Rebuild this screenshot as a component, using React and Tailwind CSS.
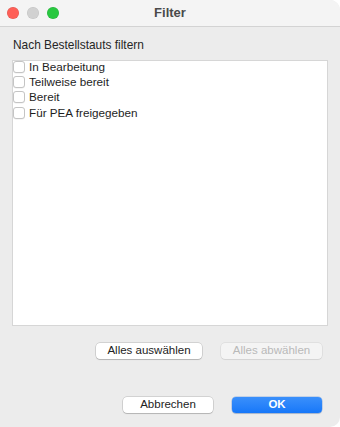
import React, { useState } from "react";

const statuses = ["In Bearbeitung", "Teilweise bereit", "Bereit", "Für PEA freigegeben"];

function Checkbox({ checked, onChange, label }) {
  return (
    <label className="flex h-[12px] items-center gap-[4px] cursor-default">
      <span
        onClick={onChange}
        className={`block h-[12px] w-[12px] shrink-0 rounded-[3px] border ${
          checked ? "border-[#1a7ff9] bg-[#1a7ff9]" : "border-[#c4c4c4] bg-white"
        } shadow-[0_0.5px_0.5px_rgba(0,0,0,0.08)]`}
      />
      <span className="text-[11.7px] leading-[12px] text-[#1e1e1e]">{label}</span>
    </label>
  );
}

function MacButton({ children, disabled, primary, className = "" }) {
  let look =
    "bg-white text-[#222] shadow-[0_0_0_0.5px_rgba(0,0,0,0.22),0_1px_1px_rgba(0,0,0,0.14)]";
  if (disabled)
    look =
      "bg-[#f4f4f4] text-[#b9b9b9] shadow-[0_0_0_0.5px_rgba(0,0,0,0.1),0_1px_1px_rgba(0,0,0,0.05)]";
  if (primary)
    look =
      "bg-gradient-to-b from-[#3a90fb] to-[#1677f9] text-white font-bold shadow-[0_0_0_0.5px_rgba(0,80,200,0.35),0_1px_1px_rgba(0,0,0,0.14)]";
  return (
    <button
      disabled={disabled}
      className={`flex h-[16px] items-center justify-center rounded-[4px] text-[11.5px] leading-none ${look} ${className}`}
    >
      {children}
    </button>
  );
}

export default function App() {
  const [checked, setChecked] = useState({});

  const toggle = (s) => setChecked({ ...checked, [s]: !checked[s] });

  return (
    <div
      className="flex h-[427px] w-[340px] flex-col overflow-hidden rounded-r-[10px] bg-[#ececec]"
      style={{ fontFamily: '"Liberation Sans", Arial, sans-serif' }}
    >
      {/* Title bar */}
      <div className="relative flex h-[27px] shrink-0 items-center border-b border-[#d3d3d3] bg-[#f4f4f4]">
        <div className="flex items-center gap-[8px] pl-[7px]">
          <span className="block h-[12px] w-[12px] rounded-full bg-[#fe5f57] shadow-[inset_0_0_0_0.5px_rgba(0,0,0,0.12)]" />
          <span className="block h-[12px] w-[12px] rounded-full bg-[#d1d1d1] shadow-[inset_0_0_0_0.5px_rgba(0,0,0,0.08)]" />
          <span className="block h-[12px] w-[12px] rounded-full bg-[#28c840] shadow-[inset_0_0_0_0.5px_rgba(0,0,0,0.12)]" />
        </div>
        <div className="absolute inset-0 flex items-center justify-center pl-[-2px] text-[13px] font-bold text-[#4a4a4a]">
          Filter
        </div>
      </div>

      {/* Body */}
      <div className="flex flex-1 flex-col">
        <div className="pl-[13px] pt-[11px] text-[11.9px] leading-[14px] text-[#262626]">
          Nach Bestellstauts filtern
        </div>

        <div className="ml-[12px] mt-[8px] h-[266px] w-[316px] border border-[#d6d6d6] bg-white pl-[0px] pt-[0px]">
          <div className="flex flex-col gap-[3.2px] pt-[0px]">
            {statuses.map((s) => (
              <Checkbox key={s} label={s} checked={!!checked[s]} onChange={() => toggle(s)} />
            ))}
          </div>
        </div>

        <div className="mt-[17px] flex justify-end gap-[19px] pr-[18px]">
          <MacButton className="w-[106px]">Alles auswählen</MacButton>
          <MacButton className="w-[101px]" disabled>
            Alles abwählen
          </MacButton>
        </div>

        <div className="mt-[38px] flex justify-end gap-[19px] pr-[18px]">
          <MacButton className="w-[90px]">Abbrechen</MacButton>
          <MacButton className="w-[90px]" primary>
            OK
          </MacButton>
        </div>
      </div>
    </div>
  );
}
